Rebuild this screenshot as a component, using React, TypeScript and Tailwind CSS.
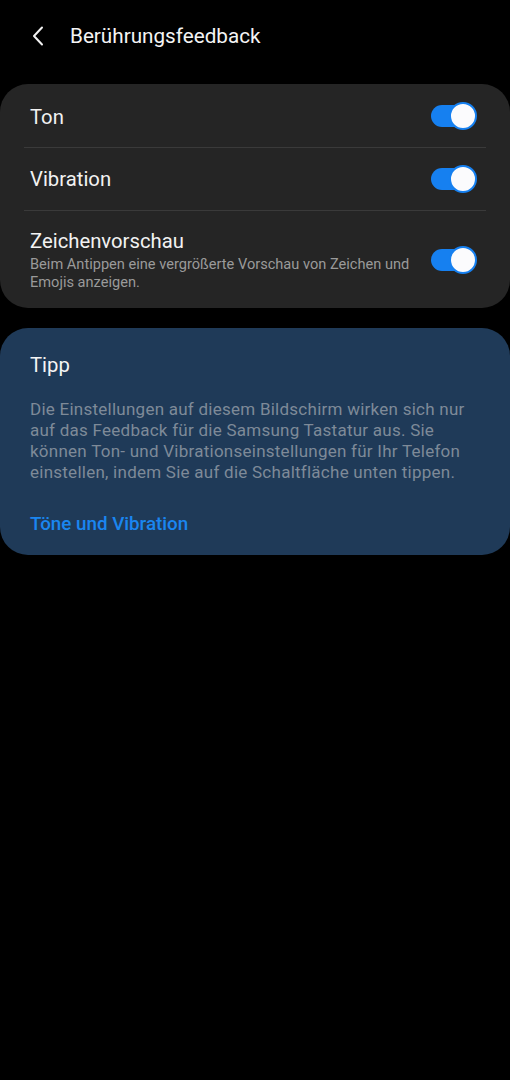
import React from "react";

function Toggle() {
  return (
    <div className="relative w-[46px] h-[28px] shrink-0">
      <div className="absolute left-0 top-[3px] w-[40px] h-[22px] rounded-full bg-[#1680f0]" />
      <div className="absolute right-0 top-0 w-[28px] h-[28px] rounded-full bg-[#fbfbfd] border-2 border-[#1680f0]" />
    </div>
  );
}

export default function App() {
  return (
    <div
      className="w-[510px] h-[1080px] bg-black text-white"
      style={{ fontFamily: "Roboto, 'Noto Sans', sans-serif" }}
    >
      <div className="h-[72px] flex items-center pl-[31px]">
        <svg width="16" height="20" viewBox="0 0 16 20" className="shrink-0">
          <path d="M11 1.5 L3 10 L11 18.5" fill="none" stroke="#f2f2f2" strokeWidth="2" strokeLinecap="round" strokeLinejoin="round" />
        </svg>
        <div className="ml-[23px] text-[20.7px] text-[#f4f4f4] leading-none">Berührungsfeedback</div>
      </div>

      <div className="mt-[12px] bg-[#252525] rounded-[28px]">
        <div className="h-[63px] flex items-center justify-between pl-[30px] pr-[33px]">
          <div className="text-[20.3px] text-[#f2f2f2] pt-[3px]">Ton</div>
          <Toggle />
        </div>
        <div className="mx-[24px] h-px bg-[#3a3a3a]" />
        <div className="h-[62px] flex items-center justify-between pl-[30px] pr-[33px]">
          <div className="text-[20.3px] text-[#f2f2f2]">Vibration</div>
          <Toggle />
        </div>
        <div className="mx-[24px] h-px bg-[#3a3a3a]" />
        <div className="flex items-center justify-between pl-[30px] pr-[33px] pt-[17px] pb-[17px]">
          <div className="flex flex-col pr-[16px]">
            <div className="text-[20.3px] leading-[26px] text-[#f2f2f2]">Zeichenvorschau</div>
            <div className="text-[14.6px] leading-[17.5px] text-[#9a9a9a] mt-[2px]">
              Beim Antippen eine vergrößerte Vorschau von Zeichen und Emojis anzeigen.
            </div>
          </div>
          <Toggle />
        </div>
      </div>

      <div className="mt-[20px] bg-[#1f3a58] rounded-[28px] pl-[30px] pr-[32px] pt-[24px] pb-[19px]">
        <div className="text-[20.3px] leading-[26px] text-[#f4f4f4]">Tipp</div>
        <div className="mt-[21px] text-[17px] tracking-[0.25px] leading-[21px] text-[#7e8a98]">
          Die Einstellungen auf diesem Bildschirm wirken sich nur auf das Feedback für die Samsung Tastatur aus. Sie können Ton- und Vibrationseinstellungen für Ihr Telefon einstellen, indem Sie auf die Schaltfläche unten tippen.
        </div>
        <div className="mt-[29px] text-[18.8px] leading-[24px] font-medium text-[#1a86f0]">Töne und Vibration</div>
      </div>
    </div>
  );
}
